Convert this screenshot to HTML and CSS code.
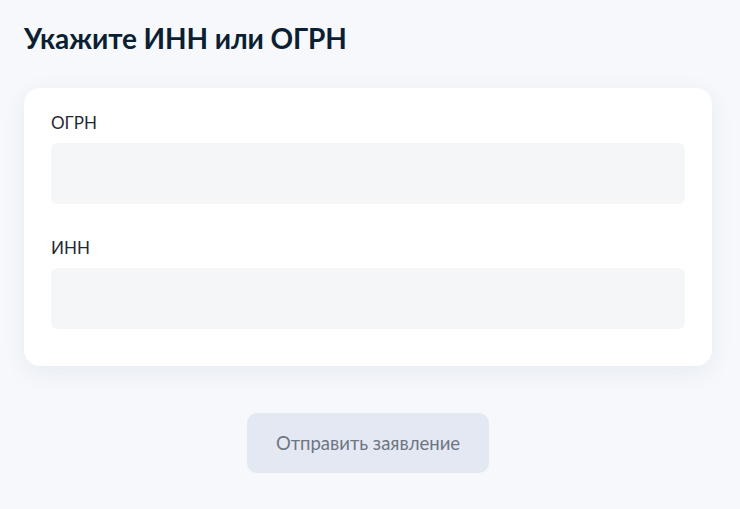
FILE: index.html
```html
<!DOCTYPE html>
<html lang="ru">
<head>
  <meta charset="UTF-8">
  <meta name="viewport" content="width=device-width, initial-scale=1.0">
  <title>Укажите ИНН или ОГРН</title>
  <link rel="stylesheet" href="styles.css">
</head>
<body>
  <main class="page">
    <h1 class="title">Укажите ИНН или ОГРН</h1>

    <form class="card">
      <div class="field">
        <label for="ogrn">ОГРН</label>
        <input type="text" id="ogrn">
      </div>
      <div class="field">
        <label for="inn">ИНН</label>
        <input type="text" id="inn">
      </div>
    </form>

    <div class="actions">
      <button type="button" disabled>Отправить заявление</button>
    </div>
  </main>
</body>
</html>
```

FILE: styles.css
```css
* {
  margin: 0;
  padding: 0;
  box-sizing: border-box;
}

body {
  font-family: Lato, "Noto Sans", sans-serif;
  background-color: #f6f8fb;
  color: #0b1f33;
}

.page {
  width: 688px;
  margin: 0 0 0 24px;
  padding-top: 21px;
}

.title {
  font-size: 28px;
  font-weight: 700;
  line-height: 34px;
  letter-spacing: -0.1px;
}

.card {
  margin-top: 33px;
  background-color: #fff;
  border-radius: 16px;
  box-shadow: 0 6px 24px rgba(30, 60, 120, 0.07);
  padding: 25px 27px 37px;
  display: flex;
  flex-direction: column;
  gap: 34px;
}

.field {
  display: flex;
  flex-direction: column;
  gap: 10px;
}

.field label {
  font-size: 17px;
  line-height: 20px;
  color: #1f2933;
}

.field input {
  height: 61px;
  border: none;
  border-radius: 6px;
  background-color: #f5f6f7;
  outline: none;
}

.actions {
  display: flex;
  justify-content: center;
  margin-top: 47px;
}

button {
  width: 242px;
  height: 60px;
  font-family: inherit;
  font-size: 18.5px;
  color: #6d7683;
  background-color: #e4e8f2;
  border: none;
  border-radius: 10px;
}
```
